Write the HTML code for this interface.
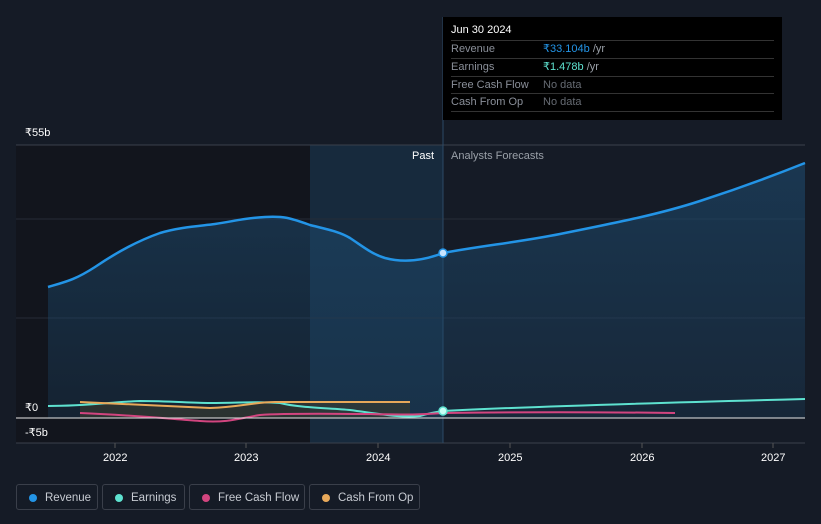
<!DOCTYPE html>
<html><head><meta charset="utf-8"><style>
body{margin:0;width:821px;height:524px;background:#151b26;font-family:"Liberation Sans",sans-serif;overflow:hidden;position:relative}
.t{position:absolute;color:#fff;font-size:11px}
.tip{position:absolute;left:443px;top:17px;width:339px;height:103px;background:#000;}
.tip .r{position:absolute;left:8px;right:8px;height:17px;border-top:1px solid #333;font-size:11px;color:#8a8f99;line-height:17px}
.tip .r span{position:absolute;left:92px}
.leg{position:absolute;top:484px;height:26px;border:1px solid #3a3f4a;border-radius:3px;font-size:11.5px;color:#c7cbd2;line-height:26px;box-sizing:border-box}
.leg i{position:absolute;left:12px;top:9px;width:8px;height:8px;border-radius:50%}
.leg b{font-weight:normal;position:absolute;left:28px}
</style></head><body>
<svg width="821" height="524" style="position:absolute;left:0;top:0">
<defs><linearGradient id="g" x1="0" y1="0" x2="0" y2="1"><stop offset="0" stop-color="#1d4a6e" stop-opacity=".6"/><stop offset="1" stop-color="#1d4a6e" stop-opacity=".25"/></linearGradient></defs>
<rect x="16" y="145" width="294" height="298" fill="#12151d"/>
<rect x="310" y="145" width="133" height="298" fill="#172a3d"/>
<line x1="16" y1="145" x2="805" y2="145" stroke="#3a404c"/>
<line x1="16" y1="219" x2="805" y2="219" stroke="#262c38"/>
<line x1="16" y1="318" x2="805" y2="318" stroke="#262c38"/>
<line x1="16" y1="443" x2="805" y2="443" stroke="#3a404c"/>
<line x1="443" y1="17" x2="443" y2="443" stroke="#2c4a66"/>
<path d="M48,287 C65,282 75,280 95,267 C120,250 140,240 160,233 C180,227 200,226 215,224 C235,221 245,218 265,217 C285,216 290,218 310,225 C330,230 340,232 350,238 C365,248 372,254 385,258 C400,262 420,262 443,253 C480,246 520,242 560,234 C620,222 660,214 700,201 C740,188 770,177 805,163 L805,418 L48,418Z" fill="url(#g)"/>
<path d="M48,287 C65,282 75,280 95,267 C120,250 140,240 160,233 C180,227 200,226 215,224 C235,221 245,218 265,217 C285,216 290,218 310,225 C330,230 340,232 350,238 C365,248 372,254 385,258 C400,262 420,262 443,253 C480,246 520,242 560,234 C620,222 660,214 700,201 C740,188 770,177 805,163" fill="none" stroke="#2394e6" stroke-width="2.5"/>
<path d="M80,402 C120,404 160,406 210,408 C240,407 255,402 275,402 L410,402 L410,418 L80,418Z" fill="#3a3c30" opacity=".6"/>
<path d="M48,406 C90,406 110,402 140,401 C170,401 190,403 210,403 C240,403 260,401 280,403 C300,408 330,408 350,410 C380,414 400,418 420,416 C430,413 435,412 443,411 C520,407 650,403 805,399" fill="none" stroke="#5ee2d0" stroke-width="2"/>
<path d="M80,413 C130,415 160,418 200,421 C230,423 240,418 260,415 C290,413 330,414 370,414 C400,415 420,415 443,413 C520,412 600,412 675,413" fill="none" stroke="#d2457f" stroke-width="2"/>
<path d="M80,402 C120,404 160,406 210,408 C240,407 255,402 275,402 L410,402" fill="none" stroke="#e8a95a" stroke-width="2"/>
<line x1="16" y1="418" x2="805" y2="418" stroke="#e8e8e8"/>
<circle cx="443" cy="253" r="4" fill="#c8e4ff" stroke="#2394e6" stroke-width="1.5"/>
<circle cx="443" cy="411" r="4" fill="#c8fff6" stroke="#5ee2d0" stroke-width="1.5"/>
<g stroke="#555" ><line x1="115" y1="443" x2="115" y2="448"/><line x1="246" y1="443" x2="246" y2="448"/><line x1="378" y1="443" x2="378" y2="448"/><line x1="510" y1="443" x2="510" y2="448"/><line x1="642" y1="443" x2="642" y2="448"/><line x1="773" y1="443" x2="773" y2="448"/></g>
</svg>
<div class="t" style="left:25px;top:126px">₹55b</div>
<div class="t" style="left:25px;top:401px">₹0</div>
<div class="t" style="left:25px;top:426px">-₹5b</div>
<div class="t" style="left:412px;top:150px">Past</div>
<div class="t" style="left:451px;top:150px;color:#9aa0a8">Analysts Forecasts</div>
<div class="t" style="left:103px;top:452px">2022</div>
<div class="t" style="left:234px;top:452px">2023</div>
<div class="t" style="left:366px;top:452px">2024</div>
<div class="t" style="left:498px;top:452px">2025</div>
<div class="t" style="left:630px;top:452px">2026</div>
<div class="t" style="left:761px;top:452px">2027</div>
<div class="tip">
<div style="position:absolute;left:8px;top:7px;color:#fff;font-size:11px">Jun 30 2024</div>
<div class="r" style="top:23px">Revenue<span style="color:#2394e6">₹33.104b <em style="font-style:normal;color:#9aa0a8">/yr</em></span></div>
<div class="r" style="top:41px">Earnings<span style="color:#5ee2d0">₹1.478b <em style="font-style:normal;color:#9aa0a8">/yr</em></span></div>
<div class="r" style="top:59px">Free Cash Flow<span style="color:#666b73">No data</span></div>
<div class="r" style="top:76px;border-bottom:1px solid #333">Cash From Op<span style="color:#666b73">No data</span></div>
</div>
<div class="leg" style="left:16px;width:82px"><i style="background:#2394e6"></i><b>Revenue</b></div>
<div class="leg" style="left:102px;width:83px"><i style="background:#5ee2d0"></i><b>Earnings</b></div>
<div class="leg" style="left:189px;width:116px"><i style="background:#d2457f"></i><b>Free Cash Flow</b></div>
<div class="leg" style="left:309px;width:111px"><i style="background:#e8a95a"></i><b>Cash From Op</b></div>
</body></html>
